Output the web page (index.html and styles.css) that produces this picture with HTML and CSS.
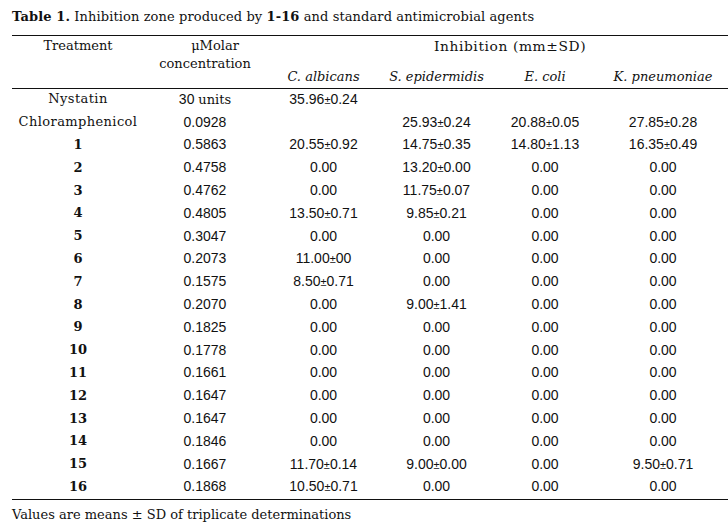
FILE: index.html
```html
<!DOCTYPE html>
<html>
<head>
<meta charset="utf-8">
<link rel="stylesheet" href="styles.css">
</head>
<body>
<div class="page">
  <div class="caption"><b>Table 1.</b> Inhibition zone produced by <b>1-16</b> and standard antimicrobial agents</div>
  <table class="tbl">
    <colgroup>
      <col class="c1"><col class="c2"><col class="c3"><col class="c4"><col class="c5"><col class="c6">
    </colgroup>
    <thead>
      <tr class="h1">
        <th rowspan="2" class="top">Treatment</th>
        <th rowspan="2" class="top"><span class="line mu">μMolar</span><span class="line">concentration</span></th>
        <th colspan="4" class="inh">Inhibition (mm±SD)</th>
      </tr>
      <tr class="h2">
        <th><i>C. albicans</i></th>
        <th><i>S. epidermidis</i></th>
        <th><i>E. coli</i></th>
        <th><i>K. pneumoniae</i></th>
      </tr>
    </thead>
    <tbody>
      <tr><td class="name">Nystatin</td><td>30 <span class="unit">units</span></td><td>35.96<span class="pm">±</span>0.24</td><td></td><td></td><td></td></tr>
      <tr><td class="name">Chloramphenicol</td><td>0.0928</td><td></td><td>25.93<span class="pm">±</span>0.24</td><td>20.88<span class="pm">±</span>0.05</td><td>27.85<span class="pm">±</span>0.28</td></tr>
      <tr><td class="num">1</td><td>0.5863</td><td>20.55<span class="pm">±</span>0.92</td><td>14.75<span class="pm">±</span>0.35</td><td>14.80<span class="pm">±</span>1.13</td><td>16.35<span class="pm">±</span>0.49</td></tr>
      <tr><td class="num">2</td><td>0.4758</td><td>0.00</td><td>13.20<span class="pm">±</span>0.00</td><td>0.00</td><td>0.00</td></tr>
      <tr><td class="num">3</td><td>0.4762</td><td>0.00</td><td>11.75<span class="pm">±</span>0.07</td><td>0.00</td><td>0.00</td></tr>
      <tr><td class="num">4</td><td>0.4805</td><td>13.50<span class="pm">±</span>0.71</td><td>9.85<span class="pm">±</span>0.21</td><td>0.00</td><td>0.00</td></tr>
      <tr><td class="num">5</td><td>0.3047</td><td>0.00</td><td>0.00</td><td>0.00</td><td>0.00</td></tr>
      <tr><td class="num">6</td><td>0.2073</td><td>11.00<span class="pm">±</span>00</td><td>0.00</td><td>0.00</td><td>0.00</td></tr>
      <tr><td class="num">7</td><td>0.1575</td><td>8.50<span class="pm">±</span>0.71</td><td>0.00</td><td>0.00</td><td>0.00</td></tr>
      <tr><td class="num">8</td><td>0.2070</td><td>0.00</td><td>9.00<span class="pm">±</span>1.41</td><td>0.00</td><td>0.00</td></tr>
      <tr><td class="num">9</td><td>0.1825</td><td>0.00</td><td>0.00</td><td>0.00</td><td>0.00</td></tr>
      <tr><td class="num">10</td><td>0.1778</td><td>0.00</td><td>0.00</td><td>0.00</td><td>0.00</td></tr>
      <tr><td class="num">11</td><td>0.1661</td><td>0.00</td><td>0.00</td><td>0.00</td><td>0.00</td></tr>
      <tr><td class="num">12</td><td>0.1647</td><td>0.00</td><td>0.00</td><td>0.00</td><td>0.00</td></tr>
      <tr><td class="num">13</td><td>0.1647</td><td>0.00</td><td>0.00</td><td>0.00</td><td>0.00</td></tr>
      <tr><td class="num">14</td><td>0.1846</td><td>0.00</td><td>0.00</td><td>0.00</td><td>0.00</td></tr>
      <tr><td class="num">15</td><td>0.1667</td><td>11.70<span class="pm">±</span>0.14</td><td>9.00<span class="pm">±</span>0.00</td><td>0.00</td><td>9.50<span class="pm">±</span>0.71</td></tr>
      <tr><td class="num">16</td><td>0.1868</td><td>10.50<span class="pm">±</span>0.71</td><td>0.00</td><td>0.00</td><td>0.00</td></tr>
    </tbody>
  </table>
  <div class="note">Values are means ± SD of triplicate determinations</div>
</div>
</body>
</html>
```
FILE: styles.css
```css
html, body {
  margin: 0;
  padding: 0;
  background: #ffffff;
}
.page {
  padding: 8px 0 0 12px;
  color: #111111;
  font-family: "DejaVu Serif", "Liberation Serif", serif;
  font-size: 13px;
}
.caption {
  height: 27px;
  line-height: 17px;
  letter-spacing: 0.1px;
  border-bottom: 1.5px solid #111;
  white-space: nowrap;
}
.tbl {
  width: 716px;
  border-collapse: collapse;
  table-layout: fixed;
}
.c1 { width: 132px; }
.c2 { width: 122px; }
.c3 { width: 115px; }
.c4 { width: 111px; }
.c5 { width: 106px; }
.c6 { width: 130px; }
.tbl th {
  font-weight: normal;
  padding: 0;
  line-height: 18px;
  text-align: center;
}
.tbl th .line {
  display: block;
}
.tbl th .mu {
  padding-left: 20px;
}
.h1 th {
  height: 22px;
  vertical-align: top;
  padding-top: 1px;
}
.h2 th {
  height: 27px;
  vertical-align: bottom;
  padding-bottom: 2px;
  border-bottom: 1.5px solid #111;
}
.h1 th.top { border-bottom: 1.5px solid #111; }
.tbl th.inh {
  padding-left: 26px;
  letter-spacing: 0.6px;
  font-size: 13.8px;
}
.tbl td {
  height: 19.8px;
  padding: 0 0 3px;
  text-align: center;
  vertical-align: middle;
  font-family: "Liberation Sans", Arial, sans-serif;
  font-size: 14px;
}
.tbl td .pm { font-size: 11px; }
.tbl td .unit {
  font-family: "DejaVu Serif", "Liberation Serif", serif;
  font-size: 13px;
}
.tbl td.name {
  font-family: "DejaVu Serif", "Liberation Serif", serif;
  font-size: 13px;
  letter-spacing: 0.4px;
}
.tbl td.num {
  font-family: "DejaVu Serif", "Liberation Serif", serif;
  font-size: 13px;
  font-weight: bold;
}
.tbl tbody tr:last-child td { border-bottom: 1.5px solid #111; }
.note {
  padding-top: 6px;
  line-height: 17px;
  white-space: nowrap;
}
```
